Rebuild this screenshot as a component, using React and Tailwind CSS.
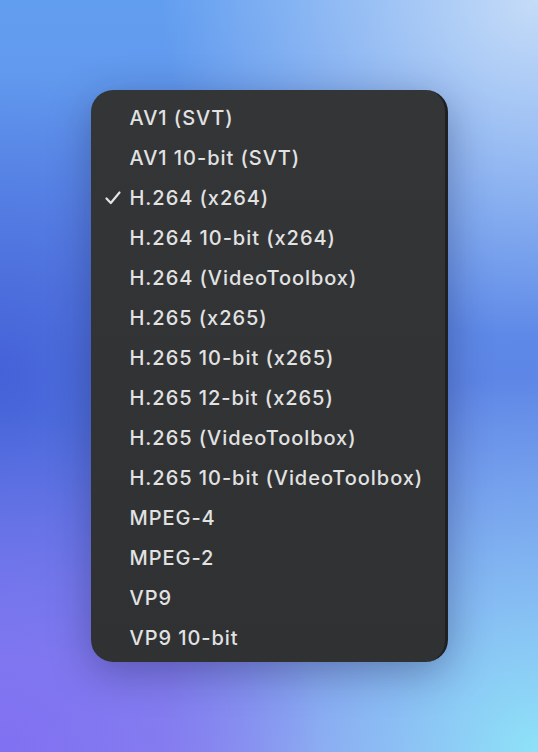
const codecs = [
  'AV1 (SVT)',
  'AV1 10-bit (SVT)',
  'H.264 (x264)',
  'H.264 10-bit (x264)',
  'H.264 (VideoToolbox)',
  'H.265 (x265)',
  'H.265 10-bit (x265)',
  'H.265 12-bit (x265)',
  'H.265 (VideoToolbox)',
  'H.265 10-bit (VideoToolbox)',
  'MPEG-4',
  'MPEG-2',
  'VP9',
  'VP9 10-bit',
]

function Check() {
  return (
    <svg viewBox="0 0 16 14" className="w-[16px] h-[14px]" fill="none">
      <path d="M1.5 7.5 L5.8 12 L14.5 1.5" stroke="#e4e4e4" strokeWidth="2.2" strokeLinecap="round" strokeLinejoin="round" />
    </svg>
  )
}

export default function App() {
  const selected = 'H.264 (x264)'

  return (
    <div className="h-screen w-full flex items-center justify-center bg-[radial-gradient(ellipse_60%_45%_at_0%_100%,#8070f2_0%,rgba(128,112,242,0)_100%),radial-gradient(ellipse_55%_40%_at_0%_50%,#4562d8_0%,rgba(69,98,216,0)_100%),radial-gradient(ellipse_70%_50%_at_100%_100%,#8ee2f8_0%,rgba(142,226,248,0)_100%),radial-gradient(ellipse_70%_45%_at_100%_0%,#c6dcf8_0%,rgba(198,220,248,0)_100%),linear-gradient(180deg,#629ef0_0%,#5d86e6_50%,#8a86ee_100%)]">
      <div className="w-[357px] h-[572px] rounded-[22px] bg-[linear-gradient(180deg,#333537_0%,#2f3133_100%)] border-r-[3px] border-[#1f2022] shadow-[0_10px_40px_rgba(20,20,60,0.35)] pt-[8px] font-['Inter','Liberation_Sans',sans-serif]">
        {codecs.map(name => (
          <div key={name} className="h-10 flex items-center">
            <div className="w-[39px] flex justify-end pr-[9px]">
              {name === selected && <Check />}
            </div>
            <span className="text-[20px] leading-none font-medium text-[#e2e2e2] tracking-[0.95px]">{name}</span>
          </div>
        ))}
      </div>
    </div>
  )
}
